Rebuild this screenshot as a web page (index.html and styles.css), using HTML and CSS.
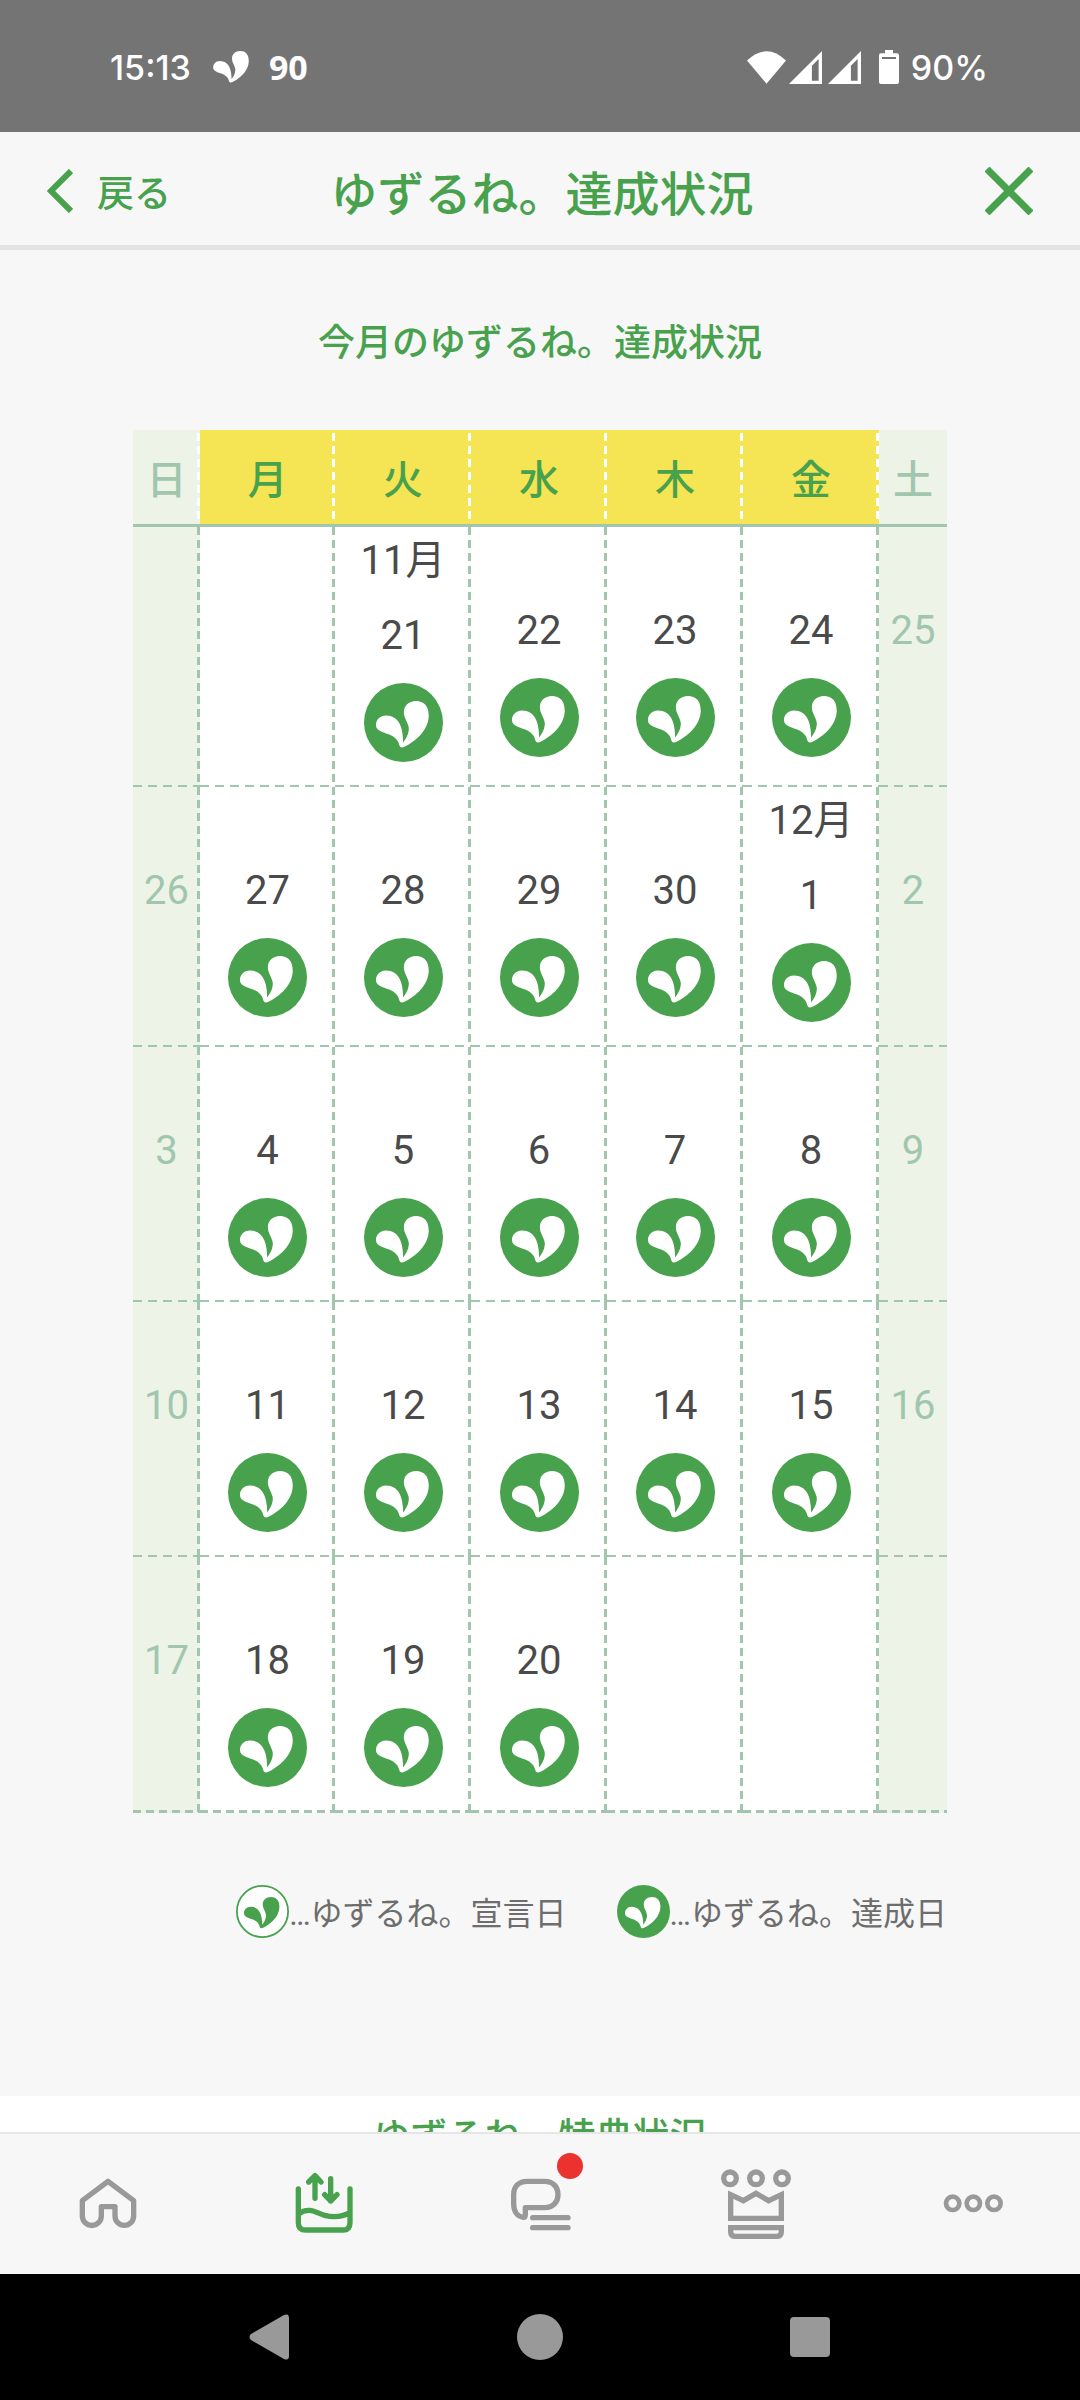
FILE: index.html
```html
<!DOCTYPE html>
<html lang="ja">
<head>
<meta charset="utf-8">
<meta name="viewport" content="width=device-width">
<title>ゆずるね。達成状況</title>
<link rel="stylesheet" href="styles.css">
</head>
<body>
<svg width="0" height="0" class="defs" aria-hidden="true">
  <defs>
    <path id="leaf" d="M142 203C142 160 130 122 90 122C70 122 59 138 60 152C61 168 80 172 100 179C118 187 127 197 130 210C132 218 137 220 146 216C180 200 219 165 219 122C219 92 203 78 181 78C158 78 144 93 144 112C144 130 158 145 159 160C159 178 150 192 142 203Z"/>
    <symbol id="done" viewBox="24 24 238 238">
      <circle cx="143" cy="143" r="119" fill="#48a14c"/>
      <use href="#leaf" fill="#fff"/>
    </symbol>
    <symbol id="declared" viewBox="24 24 238 238">
      <circle cx="143" cy="143" r="115" fill="#fff" stroke="#48a14c" stroke-width="8"/>
      <use href="#leaf" fill="#48a14c"/>
    </symbol>
    <symbol id="signal" viewBox="0 0 98 98">
      <path d="M98 0V98H0Z" fill="#fff"/>
      <path d="M68 44L88 24V88H68Z" fill="#747474"/>
    </symbol>
  </defs>
</svg>

<div class="status">
  <div class="status-left">
    <span class="clock">15:13</span>
    <svg class="status-leaf" viewBox="59 78 161 142"><use href="#leaf" fill="#fff"/></svg>
    <span class="count">90</span>
  </div>
  <div class="status-right">
    <svg class="wifi" viewBox="0 0 118 98"><path d="M59 98L0 28Q59 -28 118 28Z" fill="#fff"/></svg>
    <svg class="signal"><use href="#signal"/></svg>
    <svg class="signal"><use href="#signal"/></svg>
    <svg class="battery" viewBox="0 0 60 102"><path d="M18 0H42V10H54Q60 10 60 16V96Q60 102 54 102H6Q0 102 0 96V16Q0 10 6 10H18Z" fill="#fff"/><path d="M9 21H51V27H9Z" fill="#747474"/></svg>
    <span class="percent">90%</span>
  </div>
</div>

<header class="header">
  <button class="back" type="button">
    <svg class="chevron" viewBox="0 0 26 44"><path d="M24 2L4 22L24 42" fill="none" stroke="#48a14c" stroke-width="6"/></svg>
    <span>戻る</span>
  </button>
  <h1 class="title">ゆずるね。達成状況</h1>
  <button class="close" type="button" aria-label="閉じる">
    <svg viewBox="0 0 48 48"><path d="M2 2L46 46M46 2L2 46" fill="none" stroke="#48a14c" stroke-width="7"/></svg>
  </button>
</header>

<main class="content">
  <section class="progress">
    <h2 class="heading">今月のゆずるね。達成状況</h2>
    <table class="calendar">
      <colgroup><col class="col-sun"><col class="col-mon"><col span="4"><col class="col-sat"></colgroup>
      <thead>
        <tr><th class="weekend">日</th><th>月</th><th>火</th><th>水</th><th>木</th><th>金</th><th class="weekend">土</th></tr>
      </thead>
      <tbody>
        <tr>
          <td class="weekend"></td>
          <td></td>
          <td><div class="month first">11月</div><div class="day">21</div><svg class="mark"><use href="#done"/></svg></td>
          <td><div class="month"></div><div class="day">22</div><svg class="mark"><use href="#done"/></svg></td>
          <td><div class="month"></div><div class="day">23</div><svg class="mark"><use href="#done"/></svg></td>
          <td><div class="month"></div><div class="day">24</div><svg class="mark"><use href="#done"/></svg></td>
          <td class="weekend"><div class="month"></div><div class="day">25</div></td>
        </tr>
        <tr>
          <td class="weekend"><div class="month"></div><div class="day">26</div></td>
          <td><div class="month"></div><div class="day">27</div><svg class="mark"><use href="#done"/></svg></td>
          <td><div class="month"></div><div class="day">28</div><svg class="mark"><use href="#done"/></svg></td>
          <td><div class="month"></div><div class="day">29</div><svg class="mark"><use href="#done"/></svg></td>
          <td><div class="month"></div><div class="day">30</div><svg class="mark"><use href="#done"/></svg></td>
          <td><div class="month first">12月</div><div class="day">1</div><svg class="mark"><use href="#done"/></svg></td>
          <td class="weekend"><div class="month"></div><div class="day">2</div></td>
        </tr>
        <tr>
          <td class="weekend"><div class="month"></div><div class="day">3</div></td>
          <td><div class="month"></div><div class="day">4</div><svg class="mark"><use href="#done"/></svg></td>
          <td><div class="month"></div><div class="day">5</div><svg class="mark"><use href="#done"/></svg></td>
          <td><div class="month"></div><div class="day">6</div><svg class="mark"><use href="#done"/></svg></td>
          <td><div class="month"></div><div class="day">7</div><svg class="mark"><use href="#done"/></svg></td>
          <td><div class="month"></div><div class="day">8</div><svg class="mark"><use href="#done"/></svg></td>
          <td class="weekend"><div class="month"></div><div class="day">9</div></td>
        </tr>
        <tr>
          <td class="weekend"><div class="month"></div><div class="day">10</div></td>
          <td><div class="month"></div><div class="day">11</div><svg class="mark"><use href="#done"/></svg></td>
          <td><div class="month"></div><div class="day">12</div><svg class="mark"><use href="#done"/></svg></td>
          <td><div class="month"></div><div class="day">13</div><svg class="mark"><use href="#done"/></svg></td>
          <td><div class="month"></div><div class="day">14</div><svg class="mark"><use href="#done"/></svg></td>
          <td><div class="month"></div><div class="day">15</div><svg class="mark"><use href="#done"/></svg></td>
          <td class="weekend"><div class="month"></div><div class="day">16</div></td>
        </tr>
        <tr>
          <td class="weekend"><div class="month"></div><div class="day">17</div></td>
          <td><div class="month"></div><div class="day">18</div><svg class="mark"><use href="#done"/></svg></td>
          <td><div class="month"></div><div class="day">19</div><svg class="mark"><use href="#done"/></svg></td>
          <td><div class="month"></div><div class="day">20</div><svg class="mark"><use href="#done"/></svg></td>
          <td></td>
          <td></td>
          <td class="weekend"></td>
        </tr>
      </tbody>
    </table>
    <ul class="legend">
      <li><svg><use href="#declared"/></svg><span>…ゆずるね。宣言日</span></li>
      <li><svg><use href="#done"/></svg><span>…ゆずるね。達成日</span></li>
    </ul>
  </section>
  <section class="benefits">
    <h2 class="heading">ゆずるね。特典状況</h2>
  </section>
</main>

<nav class="tabs">
  <a href="#home" aria-label="ホーム"><svg viewBox="36 114 216 216"><path d="M144 154L221 212V258A28 28 0 0 1 165 258V230H124V258A28 28 0 0 1 67 258V212Z" stroke-linejoin="round"/></svg></a>
  <a href="#yuzurune" class="active" aria-label="ゆずるね。"><svg viewBox="684 114 216 216"><path d="M715 177V278Q715 300 737 300H849Q870 300 870 278V177M716 252C746 228 772 250 794 256C824 264 848 260 870 248M765 205V138M746 156L765 137L783 156M812 146V213M794 194L812 213L831 194" stroke-linecap="round" stroke-linejoin="round"/></svg></a>
  <a href="#messages" aria-label="お知らせ"><span class="icon"><svg viewBox="72 114 216 216"><path d="M136 233H194C219 233 234 216 234 194C234 170 218 154 194 154H142C116 154 101 170 101 194V222C101 246 114 260 130 262Q136 262 136 254ZM158 263H264M158 293H264" stroke-linecap="round" stroke-linejoin="round"/></svg><i class="badge"></i></span></a>
  <a href="#ranking" aria-label="ランキング"><svg viewBox="720 114 216 216"><circle cx="750" cy="145" r="19"/><circle cx="828" cy="145" r="19"/><circle cx="906" cy="145" r="19"/><path d="M752 194L790 212L828 190L866 212L904 194V265H752ZM752 293H904V305Q904 319 890 319H766Q752 319 752 305Z"/></svg></a>
  <a href="#more" aria-label="その他"><svg viewBox="-108 -106 216 216"><g stroke-width="14"><circle cx="-58" cy="0" r="20"/><circle cx="4" cy="0" r="20"/><circle cx="66" cy="0" r="20"/></g></svg></a>
</nav>

<div class="system">
  <button type="button" aria-label="戻る"><svg viewBox="0 0 48 48"><path d="M38 2Q43 0 43 5V43Q43 48 38 46L5 27Q2 24 5 21Z"/></svg></button>
  <button type="button" aria-label="ホーム"><svg viewBox="0 0 48 48"><circle cx="24" cy="24" r="23"/></svg></button>
  <button type="button" aria-label="最近使ったアプリ"><svg viewBox="0 0 48 48"><rect x="4" y="4" width="40" height="40" rx="4"/></svg></button>
</div>
</body>
</html>
```
FILE: styles.css
```css
:root {
  --green: #48a14c;
  --mint: #a0c7ae;
  --pale: #edf3e7;
  --yellow: #f5e554;
  --page: #f7f7f7;
}

* { box-sizing: border-box; }

body {
  margin: 0;
  height: 100vh;
  display: flex;
  flex-direction: column;
  background: var(--page);
  font-family: Roboto, "Noto Sans CJK JP", sans-serif;
  color: #4a4a4a;
}

svg { display: block; }
.defs { position: absolute; }

button {
  border: 0;
  padding: 0;
  background: none;
  font: inherit;
  color: inherit;
}

/* status bar */
.status {
  flex: none;
  height: 132px;
  padding: 2px 92px 0 110px;
  display: flex;
  align-items: center;
  justify-content: space-between;
  background: #747474;
  color: #fff;
  font-family: Inter, sans-serif;
  font-size: 34px;
}
.status-left, .status-right { display: flex; align-items: center; }
.clock { font-weight: 500; }
.status-leaf { width: 36px; height: 32px; margin: 0 20px 0 22px; }
.count { font-family: "Noto Sans", sans-serif; font-weight: 700; }
.wifi { width: 39px; height: 33px; margin-right: 3px; }
.signal { width: 33px; height: 33px; margin-right: 6px; }
.battery { width: 20px; height: 34px; margin: 0 12px; }
.percent { font-weight: 500; }

/* header */
.header {
  flex: none;
  height: 118px;
  padding: 4px 47px 0;
  display: grid;
  grid-template-columns: 1fr auto 1fr;
  align-items: center;
  border-bottom: 5px solid #e4e4e4;
  color: var(--green);
}
.back {
  display: flex;
  align-items: center;
  gap: 24px;
  font-size: 37px;
  font-weight: 500;
}
.chevron { width: 26px; height: 44px; }
.title { margin: 0; padding-left: 4px; font-size: 47px; font-weight: 500; }
.close { justify-self: end; }
.close svg { width: 48px; height: 48px; }

/* content */
.content { flex: 1; min-height: 0; overflow: hidden; }
.progress { padding: 67px 133px 158px; }
.heading {
  margin: 0;
  color: var(--green);
  font-size: 37px;
  font-weight: 500;
  line-height: 54px;
  text-align: center;
}
.benefits { padding: 15px 133px 64px; background: #fff; }

/* calendar */
.calendar {
  width: 100%;
  margin-top: 59px;
  border-spacing: 0;
  table-layout: fixed;
  background: #fff;
  font-size: 40px;
  text-align: center;
}
.col-sun { width: 67px; }
.col-mon { width: 135px; }
.col-sat { width: 68px; }
.calendar th {
  height: 97px;
  padding: 0;
  border-bottom: 3px solid var(--mint);
  background: repeating-linear-gradient(#fff 0 8px, transparent 8px 13px) right 3px / 3px 100% no-repeat var(--yellow);
  color: var(--green);
  font-weight: 500;
}
.calendar td {
  padding: 0 0 25px;
  vertical-align: top;
  background:
    repeating-linear-gradient(var(--mint) 0 8px, transparent 8px 13px) right top / 3px 100% no-repeat,
    repeating-linear-gradient(90deg, var(--mint) 0 9px, transparent 9px 15px) left bottom / 100% 2px no-repeat;
}
.calendar tr:last-child td {
  padding-bottom: 26px;
  background:
    repeating-linear-gradient(var(--mint) 0 8px, transparent 8px 13px) right top / 3px 100% no-repeat,
    repeating-linear-gradient(90deg, var(--mint) 0 8px, transparent 8px 13px) left bottom / 100% 3px no-repeat;
}
.calendar .weekend,
.calendar tr:last-child .weekend { background-color: var(--pale); color: var(--mint); }
.calendar th:last-child { background: var(--pale); }
.calendar td:last-child {
  background: repeating-linear-gradient(90deg, var(--mint) 0 9px, transparent 9px 15px) left bottom / 100% 2px no-repeat var(--pale);
}
.calendar tr:last-child td:last-child {
  background: repeating-linear-gradient(90deg, var(--mint) 0 8px, transparent 8px 13px) left bottom / 100% 3px no-repeat var(--pale);
}
.month { height: 77px; padding-top: 7px; line-height: 54px; }
.month.first { height: 82px; }
.day { line-height: 54px; }
.mark { width: 79px; height: 79px; margin: 20px auto 0; }

/* legend */
.legend {
  margin: 72px 0 0;
  padding: 0;
  display: flex;
  justify-content: flex-end;
  gap: 50px;
  list-style: none;
  font-size: 32px;
  color: #6d6d6d;
}
.legend li { display: flex; align-items: center; }
.legend svg { width: 53px; height: 53px; }
.legend span { padding-top: 4px; line-height: 48px; white-space: nowrap; }

/* bottom tabs */
.tabs {
  flex: none;
  height: 142px;
  display: grid;
  grid-template-columns: repeat(5, 1fr);
  place-items: center;
  border-top: 2px solid #e6e6e6;
  background: var(--page);
}
.tabs svg {
  width: 72px;
  height: 72px;
  fill: none;
  stroke: #999;
  stroke-width: 16;
}
.tabs .active svg { stroke: var(--green); }
.icon { display: block; position: relative; }
.badge {
  position: absolute;
  top: -15px;
  right: -7px;
  width: 26px;
  height: 26px;
  border-radius: 50%;
  background: #eb322e;
}

/* system navigation */
.system {
  flex: none;
  height: 126px;
  padding: 0 12.5%;
  display: grid;
  grid-template-columns: repeat(3, 1fr);
  place-items: center;
  background: #000;
}
.system svg { width: 48px; height: 48px; fill: #999; }
```
